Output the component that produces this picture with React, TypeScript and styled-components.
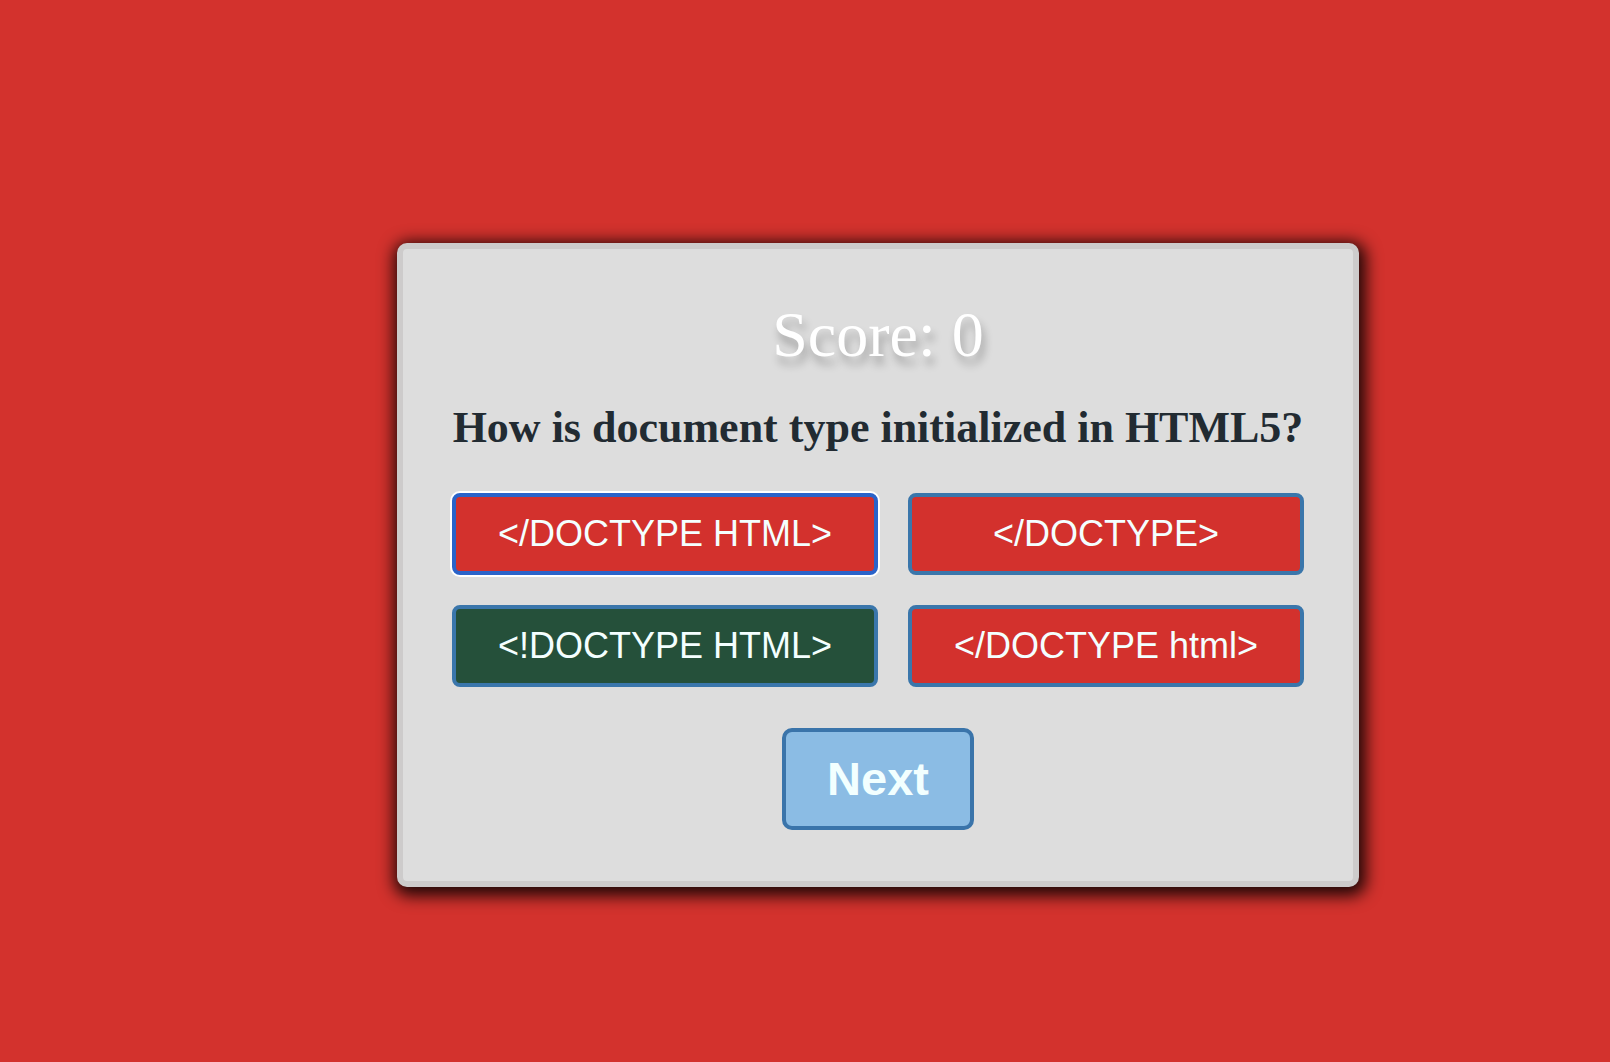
import React from "react";
import styled, { createGlobalStyle } from "styled-components";

const GlobalStyle = createGlobalStyle`
  html, body {
    margin: 0;
    padding: 0;
    background: #d3322d;
  }
  body {
    font-family: "Liberation Serif", "Times New Roman", serif;
  }
`;

const Page = styled.div`
  min-height: 1062px;
  box-sizing: border-box;
  padding: 243px 0 0 397px;
  background: #d3322d;
`;

const Card = styled.div`
  box-sizing: border-box;
  width: 962px;
  background: #dddddd;
  border: 6px solid #cdcbcb;
  border-radius: 10px;
  box-shadow: 2px 4px 16px 5px rgba(0, 0, 0, 0.85);
  padding: 49px 0 51px;
  display: flex;
  flex-direction: column;
  align-items: center;
`;

const Score = styled.h1`
  margin: 0;
  font-family: "Liberation Serif", "Times New Roman", serif;
  font-weight: 400;
  font-size: 64px;
  line-height: normal;
  color: #ffffff;
  text-shadow: 3px 8px 9px rgba(0, 0, 0, 0.28);
`;

const Question = styled.h2`
  margin: 30px 0 0;
  font-family: "Liberation Serif", "Times New Roman", serif;
  font-weight: 700;
  font-size: 44px;
  line-height: normal;
  color: #222b32;
  white-space: nowrap;
`;

const Answers = styled.div`
  margin-top: 40px;
  display: grid;
  grid-template-columns: auto auto;
  column-gap: 30px;
  row-gap: 30px;
`;

const Answer = styled.button<{ $tone: "wrong" | "right"; $focused?: boolean }>`
  box-sizing: border-box;
  height: 82px;
  padding: 0 42px;
  border: 4px solid ${(p) => (p.$focused ? "#2a63c9" : "#3a76ab")};
  border-radius: 8px;
  background: ${(p) => (p.$tone === "right" ? "#25503a" : "#d3312d")};
  color: #f4ffff;
  font-family: "Liberation Sans", Arial, Helvetica, sans-serif;
  font-size: 36px;
  line-height: 40px;
  white-space: nowrap;
  cursor: pointer;
  box-shadow: ${(p) => (p.$focused ? "0 0 0 2px #ffffff" : "none")};
  outline: none;
`;

const NextButton = styled.button`
  box-sizing: border-box;
  margin-top: 41px;
  height: 102px;
  padding: 0 41px;
  border: 4px solid #3a74aa;
  border-radius: 10px;
  background: #8bbce4;
  color: #f2ffff;
  font-family: "Liberation Sans", Arial, Helvetica, sans-serif;
  font-weight: 700;
  font-size: 47px;
  line-height: 52px;
  cursor: pointer;
`;

const answers: { text: string; tone: "wrong" | "right"; focused?: boolean }[] = [
  { text: "</DOCTYPE HTML>", tone: "wrong", focused: true },
  { text: "</DOCTYPE>", tone: "wrong" },
  { text: "<!DOCTYPE HTML>", tone: "right" },
  { text: "</DOCTYPE html>", tone: "wrong" },
];

export default function App() {
  return (
    <>
      <GlobalStyle />
      <Page>
        <Card>
          <Score>Score: 0</Score>
          <Question>How is document type initialized in HTML5?</Question>
          <Answers>
            {answers.map((a) => (
              <Answer key={a.text} $tone={a.tone} $focused={a.focused}>
                {a.text}
              </Answer>
            ))}
          </Answers>
          <NextButton>Next</NextButton>
        </Card>
      </Page>
    </>
  );
}
